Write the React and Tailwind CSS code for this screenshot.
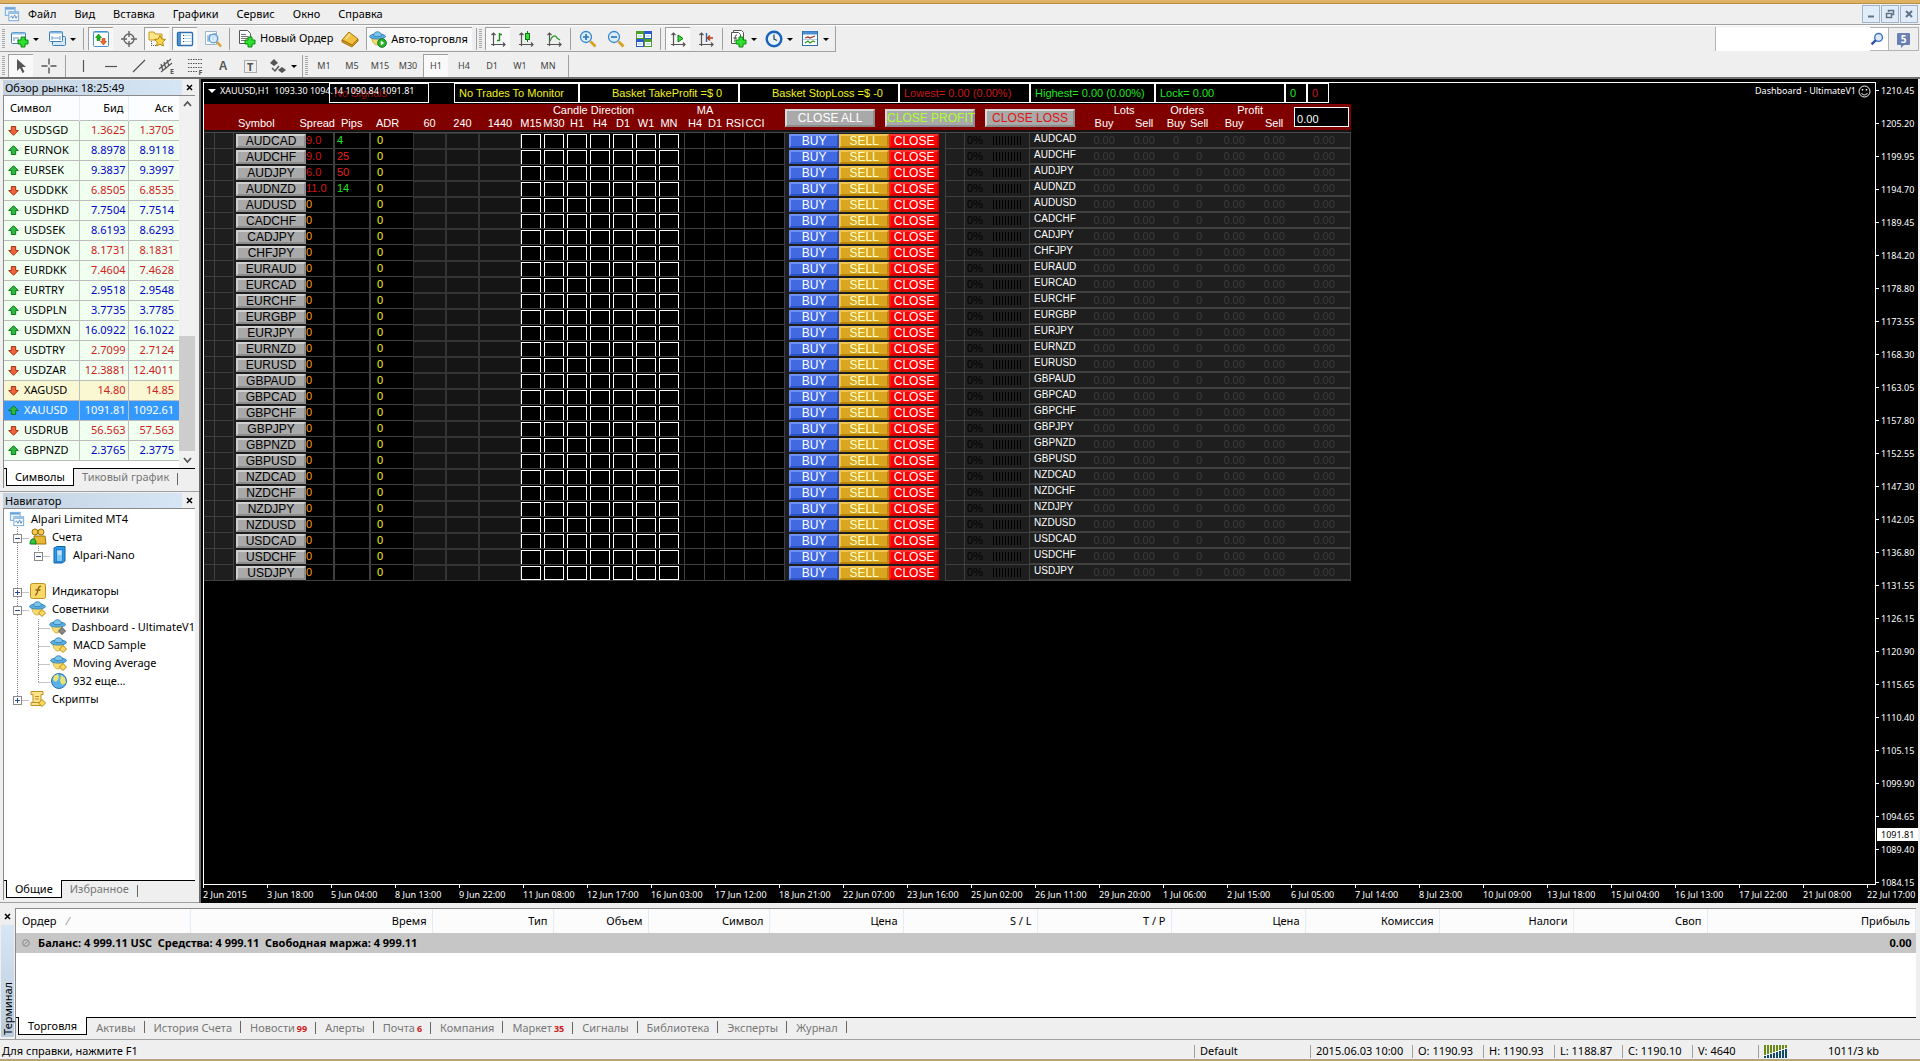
import { useState } from "react"

const quotes = [
  ["USDSGD", "1.3625", "1.3705", "down"],
  ["EURNOK", "8.8978", "8.9118", "up"],
  ["EURSEK", "9.3837", "9.3997", "up"],
  ["USDDKK", "6.8505", "6.8535", "down"],
  ["USDHKD", "7.7504", "7.7514", "up"],
  ["USDSEK", "8.6193", "8.6293", "up"],
  ["USDNOK", "8.1731", "8.1831", "down"],
  ["EURDKK", "7.4604", "7.4628", "down"],
  ["EURTRY", "2.9518", "2.9548", "up"],
  ["USDPLN", "3.7735", "3.7785", "up"],
  ["USDMXN", "16.0922", "16.1022", "up"],
  ["USDTRY", "2.7099", "2.7124", "down"],
  ["USDZAR", "12.3881", "12.4011", "down"],
  ["XAGUSD", "14.80", "14.85", "down"],
  ["XAUUSD", "1091.81", "1092.61", "up"],
  ["USDRUB", "56.563", "57.563", "down"],
  ["GBPNZD", "2.3765", "2.3775", "up"],
]

const pairs = [
  "AUDCAD", "AUDCHF", "AUDJPY", "AUDNZD", "AUDUSD", "CADCHF", "CADJPY",
  "CHFJPY", "EURAUD", "EURCAD", "EURCHF", "EURGBP", "EURJPY", "EURNZD",
  "EURUSD", "GBPAUD", "GBPCAD", "GBPCHF", "GBPJPY", "GBPNZD", "GBPUSD",
  "NZDCAD", "NZDCHF", "NZDJPY", "NZDUSD", "USDCAD", "USDCHF", "USDJPY",
]

const live = {
  AUDCAD: { spread: "9.0", pips: "4", good: true },
  AUDCHF: { spread: "9.0", pips: "25", good: false },
  AUDJPY: { spread: "6.0", pips: "50", good: false },
  AUDNZD: { spread: "11.0", pips: "14", good: true },
}

const prices = [
  "1210.45", "1205.20", "1199.95", "1194.70", "1189.45", "1184.20", "1178.80",
  "1173.55", "1168.30", "1163.05", "1157.80", "1152.55", "1147.30", "1142.05",
  "1136.80", "1131.55", "1126.15", "1120.90", "1115.65", "1110.40", "1105.15",
  "1099.90", "1094.65", "1089.40", "1084.15",
]

const times = [
  "2 Jun 2015", "3 Jun 18:00", "5 Jun 04:00", "8 Jun 13:00", "9 Jun 22:00",
  "11 Jun 08:00", "12 Jun 17:00", "16 Jun 03:00", "17 Jun 12:00", "18 Jun 21:00",
  "22 Jun 07:00", "23 Jun 16:00", "25 Jun 02:00", "26 Jun 11:00", "29 Jun 20:00",
  "1 Jul 06:00", "2 Jul 15:00", "6 Jul 05:00", "7 Jul 14:00", "8 Jul 23:00",
  "10 Jul 09:00", "13 Jul 18:00", "15 Jul 04:00", "16 Jul 13:00", "17 Jul 22:00",
  "21 Jul 08:00", "22 Jul 17:00",
]

const menu = ["Файл", "Вид", "Вставка", "Графики", "Сервис", "Окно", "Справка"]
const timeframes = ["M1", "M5", "M15", "M30", "H1", "H4", "D1", "W1", "MN"]
const candleFrames = ["M15", "M30", "H1", "H4", "D1", "W1", "MN"]

const terminalTabs = [
  ["Торговля"], ["Активы"], ["История Счета"], ["Новости", "99"], ["Алерты"],
  ["Почта", "6"], ["Компания"], ["Маркет", "35"], ["Сигналы"], ["Библиотека"],
  ["Эксперты"], ["Журнал"],
]

/* ---------- icons ---------- */

const Svg = ({ size = 18, children }) => (
  <svg width={size} height={size} viewBox="0 0 18 18" fill="none" className="shrink-0" aria-hidden="true">
    {children}
  </svg>
)

const Plus = () => (
  <path d="M10 7h4v3h3v4h-3v3h-4v-3H7v-4h3z" fill="#2fe02f" stroke="#0a8a12" />
)

const AppIcon = () => (
  <Svg size={16}>
    <rect x="1.5" y="1.5" width="11" height="9" fill="#e8f3fc" stroke="#6aa3d8" />
    <path d="M2 3h10" stroke="#6aa3d8" strokeWidth="2" />
    <rect x="5.5" y="6.5" width="11" height="10" fill="#fff" stroke="#6aa3d8" />
    <path d="M6 8h10" stroke="#8cbce6" strokeWidth="2" />
    <path d="M7 13l1.5-2 1.5 3 2-4 1.5 4 1.5-3" stroke="#4a86c0" />
  </Svg>
)

const NewChartIcon = () => (
  <Svg>
    <rect x="0.5" y="2.5" width="14" height="11" rx="1" fill="#fff" stroke="#3c7fb1" />
    <path d="M1 3.5h13" stroke="#8cc0e6" strokeWidth="2" />
    <path d="M3 11V7M5 9v-2M7 11V7" stroke="#5a8fc0" />
    <Plus />
  </Svg>
)

const ProfilesIcon = () => (
  <Svg>
    <rect x="4.5" y="6.5" width="13" height="9" rx="1" fill="#d4e8f8" stroke="#3c7fb1" />
    <rect x="1.5" y="1.5" width="13" height="10" rx="1" fill="#fff" stroke="#3c7fb1" />
    <path d="M2 2.5h12" stroke="#7db4e0" strokeWidth="2" />
    <path d="M4 8h8M4 6v4M12 6v4" stroke="#6aa3d8" />
  </Svg>
)

const MarketIcon = () => (
  <Svg>
    <rect x="1.5" y="1.5" width="15" height="15" rx="1" fill="#fff" stroke="#4a90cc" />
    <path d="M2 2.5h14" stroke="#8cc0e6" />
    <path d="M6.5 4l3 3.5H8v3H5v-3H3.5z" fill="#1db51d" stroke="#0a7a12" strokeWidth=".6" />
    <path d="M11.5 15l-3-3.5H10v-3h3v3h1.5z" fill="#f06a30" stroke="#b03a10" strokeWidth=".6" />
  </Svg>
)

const TargetIcon = () => (
  <Svg>
    <circle cx="9" cy="9" r="5" stroke="#666" strokeWidth="1.4" />
    <path d="M9 1v6M9 11v6M1 9h6M11 9h6" stroke="#666" strokeWidth="1.4" />
  </Svg>
)

const FolderStarIcon = () => (
  <Svg>
    <path d="M1 2h5l1 2h7v6H1z" fill="#fbe68a" stroke="#c79a20" />
    <path d="M3.5 11v5M5 15.5h3" stroke="#555" strokeDasharray="1 1" />
    <path d="M12 5.5l1.7 3.5 3.8.5-2.8 2.7.7 3.8-3.4-1.8-3.4 1.8.7-3.8L6.5 9.5l3.8-.5z" fill="#fbd84a" stroke="#b8860b" />
  </Svg>
)

const PanelIcon = () => (
  <Svg>
    <rect x="1.5" y="2.5" width="15" height="13" rx="1" fill="#fff" stroke="#2a6fb0" strokeWidth="1.4" />
    <rect x="2" y="3" width="3" height="12" fill="#4a90d0" />
    <path d="M7 5.5h8M7 8.5h8M7 11.5h8" stroke="#b8d4ec" />
    <path d="M7 5.5h1M7 8.5h1M7 11.5h1" stroke="#444" />
  </Svg>
)

const TesterIcon = () => (
  <Svg>
    <path d="M1.5 1.5h11v13h-11z" fill="#fff" stroke="#9ab4cc" />
    <path d="M4 12V5M6 9V4M9 10V4M11 7V3" stroke="#5a8fc0" />
    <circle cx="9.5" cy="8.5" r="4.3" fill="#cfe8fb" fillOpacity=".8" stroke="#5a9ad4" strokeWidth="1.3" />
    <path d="M13 12l4 4.5" stroke="#d8a030" strokeWidth="2.5" />
  </Svg>
)

const NewOrderIcon = () => (
  <Svg>
    <path d="M1.5.5h8l3 3v10h-11z" fill="#fff" stroke="#555" />
    <path d="M3 4.5h5M3 6.5h7M3 8.5h7M3 10.5h4" stroke="#777" />
    <Plus />
  </Svg>
)

const BookIcon = () => (
  <Svg>
    <path d="M1 10L8 2l9 7-6 6z" fill="#f2c040" stroke="#a87410" />
    <path d="M1 10v2l10 5 6-6V9l-6 6z" fill="#d89a20" stroke="#a87410" />
    <path d="M5 9l4-5" stroke="#fde690" strokeWidth="1.5" />
  </Svg>
)

// hat-and-face adviser glyph; badge is the small mark at its lower right
const AdvisorIcon = ({ badge = "gold" }) => (
  <Svg>
    <path d="M3 7h10c.5 4-2 8-5 8S2.500 11 3 7z" fill="#f6dc70" stroke="#c8a030" strokeWidth=".8" />
    <ellipse cx="8.5" cy="6.5" rx="8" ry="2.6" fill="#5aaee0" stroke="#2a78b0" strokeWidth=".8" />
    <path d="M4.5 5.5c0-5 8-5 8 0 0 1.5-8 1.5-8 0z" fill="#7cc6ee" stroke="#2a78b0" strokeWidth=".8" />
    {badge === "gold" && <path d="M13 9.5l3.5 3.5-3.5 3.5L9.5 13z" fill="#fbd860" stroke="#b8860b" />}
    {badge === "gray" && <path d="M13 9.5l3.5 3.5-3.5 3.5L9.5 13z" fill="#888" stroke="#555" />}
    {badge === "play" && (
      <>
        <circle cx="13" cy="13" r="4.3" fill="#2cb52c" stroke="#0a7a12" />
        <path d="M11.8 10.8l3.4 2.2-3.4 2.2z" fill="#fff" />
      </>
    )}
  </Svg>
)

const Axes = () => (
  <path d="M4.5 16V3M2.500 5l2-2 2 2M2 14.500h14M14 12.500l2 2-2 2" stroke="#555" strokeWidth="1.2" />
)

const BarChartIcon = () => (
  <Svg>
    <Axes />
    <path d="M10.5 3v8M8 10.5h2.500M10.5 4.500H13" stroke="#1d8a1d" strokeWidth="1.4" />
  </Svg>
)

const CandleIcon = () => (
  <Svg>
    <Axes />
    <path d="M10.5 1v11" stroke="#0a7a12" />
    <rect x="8.5" y="3.5" width="4" height="6" fill="#3fd83f" stroke="#0a7a12" />
  </Svg>
)

const LineChartIcon = () => (
  <Svg>
    <Axes />
    <path d="M5 11c2-5 5-7 7-3l3 2" stroke="#2a9a2a" strokeWidth="1.2" />
  </Svg>
)

const ZoomIcon = ({ plus }) => (
  <Svg>
    <circle cx="7" cy="7" r="5.5" fill="#d8eefc" stroke="#3c86c8" strokeWidth="1.3" />
    <path d={plus ? "M4 7h6M7 4v6" : "M4 7h6"} stroke="#2a70b0" strokeWidth="1.6" />
    <path d="M11.5 11.5l5 5" stroke="#d8a020" strokeWidth="2.8" />
  </Svg>
)

const TileIcon = () => (
  <Svg>
    <rect x="1" y="1" width="8" height="8" fill="#4aa02a" />
    <rect x="9" y="1" width="8" height="8" fill="#2a5ac8" />
    <rect x="1" y="9" width="8" height="8" fill="#2a5ac8" />
    <rect x="9" y="9" width="8" height="8" fill="#4aa02a" />
    <path d="M2 4h6v4H2zM10 4h6v4h-6zM2 12h6v4H2zM10 12h6v4h-6z" fill="#fff" />
    <path d="M3 6h4M11 6h4M3 14h4M11 14h4" stroke="#9ac0e0" />
  </Svg>
)

const ScrollIcon = () => (
  <Svg>
    <Axes />
    <path d="M9 5l5 3.500L9 12z" fill="#3fd83f" stroke="#0a7a12" />
  </Svg>
)

const ShiftIcon = () => (
  <Svg>
    <Axes />
    <path d="M9.5 3v9" stroke="#2a60a0" strokeWidth="1.4" />
    <path d="M16 8h-5M13 5.500L10.500 8l2.500 2.500" stroke="#b83a10" strokeWidth="1.5" />
  </Svg>
)

const IndicatorsIcon = () => (
  <Svg>
    <path d="M4.500.5h8l2 2v10h-10z" fill="#fff" stroke="#555" />
    <path d="M2.500 2.500h7l2 2v9h-9z" fill="#fff" stroke="#555" />
    <path d="M8 5c-3-1-1 7-3 6.500M4.500 8h3.500" stroke="#444" />
    <Plus />
  </Svg>
)

const ClockIcon = () => (
  <Svg>
    <circle cx="9" cy="9" r="7.3" fill="#e8f4fd" stroke="#1a62b8" strokeWidth="2.4" />
    <path d="M9 4.500V9l3 1.500" stroke="#444" strokeWidth="1.3" />
  </Svg>
)

const TemplateIcon = () => (
  <Svg>
    <rect x="1.5" y="1.5" width="15" height="14" fill="#fff" stroke="#2a6fb0" />
    <path d="M2 3h14" stroke="#4a90d0" strokeWidth="3" />
    <path d="M4 8l3-1 2 1 5-2" stroke="#a03020" strokeWidth="1.3" />
    <path d="M4 13l3-2 2 2 3-2 2 1" stroke="#2a9a2a" strokeWidth="1.3" />
    <path d="M2 9.500h14" stroke="#bcd" />
  </Svg>
)

const CursorIcon = () => (
  <Svg>
    <path d="M5 2v12l3-3 2.500 5 2-1-2.500-5h4z" fill="#555" />
  </Svg>
)

const CrossIcon = () => (
  <Svg>
    <path d="M9 1.500v6M9 10.500v6M1.500 9h6M10.500 9h6" stroke="#555" strokeWidth="1.4" />
  </Svg>
)

const LineIcon = ({ d }) => (
  <Svg>
    <path d={d} stroke="#555" strokeWidth="1.2" />
  </Svg>
)

const ChannelIcon = () => (
  <Svg>
    <path d="M1 12L13 2M3 15L14 6M3 7l2 7M6 5l2 7M9 3l2 6" stroke="#555" strokeWidth="1.2" />
    <text x="12" y="17" fontSize="7" fontWeight="bold" fill="#555">E</text>
  </Svg>
)

const FiboIcon = () => (
  <Svg>
    <path d="M2 2.500h14M2 6.500h14M2 10.500h14M2 14.500h9" stroke="#555" strokeDasharray="1.5 1" />
    <text x="12.5" y="17.5" fontSize="7" fontWeight="bold" fill="#555">F</text>
  </Svg>
)

const TextBoxIcon = () => (
  <Svg>
    <rect x="2.5" y="3.5" width="12" height="12" stroke="#666" strokeDasharray="1 1" />
    <text x="5" y="14" fontSize="11" fontWeight="bold" fill="#555">T</text>
  </Svg>
)

const ArrowsIcon = () => (
  <Svg>
    <path d="M5 2l4 4-4 3-4-3zM13 10l4 3-4 3-4-3z" fill="#555" />
    <path d="M3 11l3 3 4-5" stroke="#555" strokeWidth="1.5" />
  </Svg>
)

const SearchIcon = () => (
  <Svg size={14}>
    <circle cx="11" cy="7" r="5" fill="#dce9f8" stroke="#3a6fc8" strokeWidth="1.8" />
    <path d="M7.500 10.500L2 16" stroke="#2a52a8" strokeWidth="3" />
  </Svg>
)

const QuoteArrow = ({ dir }) => (
  <svg width="11" height="11" viewBox="0 0 11 11" className="shrink-0" aria-hidden="true">
    {dir === "up" ? (
      <path d="M5.500.7L10.300 5.500H7.700v4H3.300v-4H.7z" fill="#2fb83f" stroke="#0b7a1c" />
    ) : (
      <path d="M5.500 10.300L.7 5.500h2.600v-4h4.400v4h2.600z" fill="#f0623a" stroke="#a8340f" />
    )}
  </svg>
)

const AccountsIcon = () => (
  <Svg>
    <circle cx="6" cy="4" r="3" fill="#f2c84a" stroke="#9a7010" />
    <circle cx="12" cy="4" r="3" fill="#f2c84a" stroke="#9a7010" />
    <path d="M5 8h11l1 8H6z" fill="#e8b830" stroke="#9a7010" />
    <path d="M1 16c0-6 5-7 6-2v2z" fill="#2fc83f" stroke="#0b7a1c" />
  </Svg>
)

const ServerIcon = () => (
  <Svg>
    <path d="M4 2l3-1.500h8V15l-3 2H4z" fill="#2a9ae8" stroke="#0f62a8" />
    <rect x="6.5" y="3.5" width="6" height="12" fill="#7cc8f8" stroke="#0f62a8" strokeWidth=".6" />
    <path d="M7.500 6h4M7.500 8h4" stroke="#fff" />
  </Svg>
)

const FunctionIcon = () => (
  <Svg>
    <rect x="1.5" y="1.5" width="15" height="15" rx="2" fill="#f8d868" stroke="#c09020" />
    <path d="M12 4.500c-4-1.500-2.500 9-6 8.500M6.500 8h5" stroke="#8a6410" strokeWidth="1.4" />
  </Svg>
)

const GlobeIcon = () => (
  <Svg>
    <circle cx="9" cy="9" r="7.5" fill="#5ab0e8" stroke="#2a70b0" />
    <path d="M4 4l4-2 1 4-3 4-3-2zM11 3l4 3 1 5-4 2-2-4z" fill="#e8e470" />
  </Svg>
)

const ScriptIcon = () => (
  <Svg>
    <path d="M2 1.500h12v3h-2v8H4v-8H2zM2 12.500h10v3H2z" fill="#fbe48a" stroke="#c09020" />
    <path d="M6 6.500h4M6 9h4" stroke="#c09020" />
    <path d="M13 9.500l3.500 3.500-3.500 3.500L9.500 13z" fill="#fbd860" stroke="#b8860b" />
  </Svg>
)

/* ---------- toolbar parts ---------- */

const Tool = ({ label, pressed, caret, children }) => (
  <button
    type="button"
    aria-label={label}
    aria-pressed={pressed}
    className={`flex h-[23px] shrink-0 items-center justify-center gap-1 border-t border-l ${
      caret ? "w-8" : "w-[25px]"
    } ${pressed ? "border-[#a0a0a0] bg-[#f9f9f9]" : "border-transparent"}`}
  >
    {children}
    {caret && <span className="h-0 w-0 shrink-0 border-x-[3px] border-t-[3px] border-x-transparent border-t-black"></span>}
  </button>
)

const Grip = () => <span className="mr-[3px] ml-0.5 h-5 w-[3px] shrink-0 bg-[repeating-linear-gradient(#a8a8a8_0_1px,#efefef_1px_2px)]"></span>
const Sep = () => <span className="h-[22px] w-px shrink-0 bg-[#a0a0a0]"></span>

const MenuBar = () => (
  <div className="flex h-[21px] items-center border-b border-[#a0a0a0] pl-1">
    <AppIcon />
    <nav className="ml-2 flex gap-[18px] text-[11px] leading-4 text-black">
      {menu.map((item) => (
        <a key={item} href="#">{item}</a>
      ))}
    </nav>
    <div className="ml-auto flex gap-px pr-0.5 text-[#5f7486]">
      {["Свернуть", "Восстановить", "Закрыть"].map((label, i) => (
        <button
          key={label}
          type="button"
          aria-label={label}
          className="flex h-[18px] w-[18px] items-center justify-center border border-[#9db4cc] bg-[#e0ecf8]"
        >
          <svg width="10" height="10" viewBox="0 0 10 10" fill="none" stroke="currentColor" strokeWidth="1.5">
            {i === 0 && <path d="M2 7.500h6" strokeWidth="2" />}
            {i === 1 && <path d="M3.500 3V1.500h5v4H7M1.500 4.500h5v4h-5z" />}
            {i === 2 && <path d="M2 2l6 6M8 2L2 8" strokeWidth="2" />}
          </svg>
        </button>
      ))}
    </div>
  </div>
)

const MainToolbar = () => (
  <div className="flex h-[27px] items-stretch justify-between border-t border-white">
    <div className="flex items-center border-r border-b border-[#a0a0a0]">
      <Grip />
      <div className="flex gap-[5px] pr-1.5">
        <Tool label="Новый график" caret><NewChartIcon /></Tool>
        <Tool label="Профили" caret><ProfilesIcon /></Tool>
      </div>
      <Sep />
      <div className="flex gap-[3px] px-1">
        <Tool label="Обзор рынка" pressed><MarketIcon /></Tool>
        <Tool label="Окно данных"><TargetIcon /></Tool>
        <Tool label="Навигатор" pressed><FolderStarIcon /></Tool>
        <Tool label="Терминал" pressed><PanelIcon /></Tool>
        <Tool label="Тестер стратегий"><TesterIcon /></Tool>
      </div>
      <Sep />
      <button type="button" className="mr-1 ml-2 flex items-center gap-1 text-[11px]">
        <NewOrderIcon />
        Новый Ордер
      </button>
      <Tool label="MetaEditor"><BookIcon /></Tool>
      <button type="button" className="mx-1 flex h-[23px] items-center gap-1 border-t border-l border-[#a0a0a0] bg-[#f9f9f9] pr-1 pl-0.5 text-[11px]">
        <AdvisorIcon badge="play" />
        Авто-торговля
      </button>
      <Sep />
      <Grip />
      <div className="flex gap-[3px] pr-1">
        <Tool label="Бары" pressed><BarChartIcon /></Tool>
        <Tool label="Свечи"><CandleIcon /></Tool>
        <Tool label="Линия"><LineChartIcon /></Tool>
      </div>
      <Sep />
      <div className="flex gap-[3px] px-1">
        <Tool label="Увеличить"><ZoomIcon plus /></Tool>
        <Tool label="Уменьшить"><ZoomIcon /></Tool>
        <Tool label="Окна мозаикой"><TileIcon /></Tool>
      </div>
      <Sep />
      <div className="flex gap-[3px] px-1">
        <Tool label="Автопрокрутка" pressed><ScrollIcon /></Tool>
        <Tool label="Сдвиг графика"><ShiftIcon /></Tool>
      </div>
      <Sep />
      <div className="flex gap-1 px-1">
        <Tool label="Индикаторы" caret><IndicatorsIcon /></Tool>
        <Tool label="Периоды" caret><ClockIcon /></Tool>
        <Tool label="Шаблоны" caret><TemplateIcon /></Tool>
      </div>
    </div>
    <div className="mt-px mr-px flex h-6 items-stretch border border-[#b4b4b4]">
      <div className="flex w-[172px] items-center bg-white pr-1">
        <input aria-label="Поиск" className="min-w-0 flex-1 bg-white px-1 outline-none" />
        <SearchIcon />
      </div>
      <button type="button" aria-label="Сообщения" className="flex w-[30px] items-center justify-center border-l border-[#b4b4b4]">
        <span className="relative rounded-[1px] bg-[#6a80b4] px-1 text-[10px] leading-3 font-bold text-white">
          5
          <span className="absolute top-full left-1 h-0 w-0 border-t-[3px] border-r-[3px] border-t-[#6a80b4] border-r-transparent"></span>
        </span>
      </button>
    </div>
  </div>
)

const LineToolbar = () => {
  const [active, setActive] = useState("H1")
  return (
    <div className="flex h-[27px] items-center border-b-2 border-[#707070] pt-0.5">
      <Grip />
      <div className="flex gap-[3px] pr-1">
        <Tool label="Курсор" pressed><CursorIcon /></Tool>
        <Tool label="Перекрестие"><CrossIcon /></Tool>
      </div>
      <Sep />
      <div className="flex gap-[3px] pl-1">
        <Tool label="Вертикальная линия"><LineIcon d="M9.500 3v12" /></Tool>
        <Tool label="Горизонтальная линия"><LineIcon d="M3 9.500h12" /></Tool>
        <Tool label="Трендовая линия"><LineIcon d="M3 15L15 3" /></Tool>
        <Tool label="Канал"><ChannelIcon /></Tool>
        <Tool label="Фибоначчи"><FiboIcon /></Tool>
        <Tool label="Текст"><span className="font-['Liberation_Sans',sans-serif] text-[12px] font-bold text-[#555]">A</span></Tool>
        <Tool label="Метка"><TextBoxIcon /></Tool>
        <Tool label="Стрелки" caret><ArrowsIcon /></Tool>
      </div>
      <span className="w-1"></span>
      <Sep />
      <Grip />
      <div className="flex gap-[3px] pr-2">
        {timeframes.map((tf) => (
          <button
            key={tf}
            type="button"
            onClick={() => setActive(tf)}
            className={`h-[23px] w-[25px] border-t border-l text-center text-[9px] text-[#444] ${
              active === tf ? "border-[#a0a0a0] bg-[#f9f9f9]" : "border-transparent"
            }`}
          >
            {tf}
          </button>
        ))}
      </div>
      <Sep />
    </div>
  )
}

/* ---------- left column ---------- */

const PanelTitle = ({ children }) => (
  <div className="ml-[3px] flex h-[15px] items-center justify-between pr-1 text-[11px] leading-[15px]">
    <span className="w-[179px] bg-linear-to-r from-[#c4d2e0] to-[#d6e6f5] pl-0.5">{children}</span>
    <button type="button" aria-label="Закрыть" className="flex h-3 w-3 items-center justify-center">
      <svg width="7" height="7" viewBox="0 0 7 7" stroke="#000" strokeWidth="1.5">
        <path d="M1 1l5 5M6 1L1 6" />
      </svg>
    </button>
  </div>
)

const PanelTabs = ({ active, other }) => (
  <div className="flex h-5 items-start border-t border-black bg-[#efefef] text-[11px] leading-4">
    <button type="button" className="-mt-px ml-0.5 h-[18px] border-x border-b border-black bg-white px-2">{active}</button>
    <button type="button" className="px-2 text-[#777]">{other}</button>
    <span className="mt-1 h-3 w-px bg-[#666]"></span>
  </div>
)

const MarketWatch = () => (
  <section>
    <PanelTitle>Обзор рынка: 18:25:49</PanelTitle>
    <div className="mr-1 ml-[3px] border-t border-l border-[#8a8a8a] bg-white">
      <div className="flex">
        <div className="h-[372px] flex-1">
          <table className="w-full table-fixed text-[11px]">
            <colgroup>
              <col />
              <col className="w-[49px]" />
              <col className="w-[51px]" />
            </colgroup>
            <thead>
              <tr className="h-6 bg-[#fcfdfe]">
                <th className="border-r border-[#e2edf7] py-0 pl-1.5 text-left font-normal">Символ</th>
                <th className="border-r border-[#e2edf7] py-0 pr-1 text-right font-normal">Бид</th>
                <th className="py-0 pr-1.5 text-right font-normal">Аск</th>
              </tr>
            </thead>
            <tbody className="border-b border-[#bdbdbd]">
              {quotes.map(([symbol, bid, ask, dir]) => {
                const selected = symbol === "XAUUSD"
                const tone = selected ? "text-white" : dir === "up" ? "text-[#0000c8]" : "text-[#d0201c]"
                return (
                  <tr
                    key={symbol}
                    className={`h-5 border-t border-[#bdbdbd] ${
                      selected ? "bg-[#3399ff] text-white" : symbol === "XAGUSD" ? "bg-[#faf8d2]" : "bg-[#f0fff0]"
                    }`}
                  >
                    <td className="border-r border-[#bdbdbd] p-0">
                      <span className="flex items-center gap-[5px] pl-1 leading-[18px]">
                        <QuoteArrow dir={dir} />
                        {symbol}
                      </span>
                    </td>
                    <td className={`border-r border-[#bdbdbd] py-0 pr-0.5 text-right leading-[18px] ${tone}`}>{bid}</td>
                    <td className={`py-0 pr-[5px] text-right leading-[18px] ${tone}`}>{ask}</td>
                  </tr>
                )
              })}
            </tbody>
          </table>
        </div>
        <div className="flex w-[16px] flex-col items-center bg-[#f1f1f1] py-1">
          <svg width="9" height="9" viewBox="0 0 9 9" fill="none" stroke="#555" strokeWidth="1.8">
            <path d="M1 6l3.500-4L8 6" />
          </svg>
          <div className="flex-1"></div>
          <div className="h-[115px] w-full bg-[#cdcdcd]"></div>
          <svg width="9" height="9" viewBox="0 0 9 9" fill="none" stroke="#555" strokeWidth="1.8" className="mt-1">
            <path d="M1 3l3.500 4L8 3" />
          </svg>
        </div>
      </div>
      <PanelTabs active="Символы" other="Тиковый график" />
    </div>
  </section>
)

const Expander = ({ open }) => (
  <svg width="9" height="9" viewBox="0 0 9 9" className="mt-0.5 shrink-0" aria-hidden="true">
    <rect x=".5" y=".5" width="8" height="8" fill="#fff" stroke="#8a8a8a" />
    <path d={open ? "M2 4.500h5" : "M2 4.500h5M4.500 2v5"} stroke="#2a4a9a" />
  </svg>
)

const tree = [
  { level: 1, open: true, icon: <AccountsIcon />, label: "Счета" },
  { level: 2, open: true, icon: <ServerIcon />, label: "Alpari-Nano" },
  { level: 0 },
  { level: 1, open: false, icon: <FunctionIcon />, label: "Индикаторы" },
  { level: 1, open: true, icon: <AdvisorIcon />, label: "Советники" },
  { level: 2, icon: <AdvisorIcon badge="gray" />, label: "Dashboard - UltimateV1" },
  { level: 2, icon: <AdvisorIcon />, label: "MACD Sample" },
  { level: 2, icon: <AdvisorIcon />, label: "Moving Average" },
  { level: 2, icon: <GlobeIcon />, label: "932 еще..." },
  { level: 1, open: false, icon: <ScriptIcon />, label: "Скрипты" },
]

const Navigator = () => (
  <section className="mt-[3px] flex flex-1 flex-col border-t border-[#a0a0a0] pt-px">
    <PanelTitle>Навигатор</PanelTitle>
    <div className="mr-1 ml-[3px] flex flex-1 flex-col border-t border-l border-[#8a8a8a] bg-white">
      <div className="relative flex-1 overflow-hidden pt-px text-[11px] leading-[18px] whitespace-nowrap">
        <svg width="60" height="200" className="absolute top-0 left-0" fill="none" stroke="#888" strokeDasharray="1 1" aria-hidden="true">
          <path d="M13.500 18v173M13.500 29.500h12M13.500 83.500h12M13.500 101.500h12M13.500 191.500h12" />
          <path d="M34.500 37v10M34.500 47.500h12M34.500 110v64M34.500 119.500h12M34.500 137.500h12M34.500 155.500h12M34.500 173.500h12" />
        </svg>
        <div className="relative flex items-center pl-[5px]">
          <AppIcon />
          <span className="ml-1.5">Alpari Limited MT4</span>
        </div>
        {tree.map((node, i) => (
          <div
            key={i}
            className={`relative flex h-[18px] items-center ${node.level === 2 ? "pl-[30px]" : "pl-[9px]"}`}
          >
            {node.open === undefined ? <span className="w-[9px]"></span> : <Expander open={node.open} />}
            <span className="ml-[7px] flex items-center gap-[5px]">
              {node.icon}
              {node.label}
            </span>
          </div>
        ))}
      </div>
      <PanelTabs active="Общие" other="Избранное" />
    </div>
    <div className="h-[3px] border-b border-[#a0a0a0]"></div>
  </section>
)

/* ---------- dashboard ---------- */

const columns = [
  "w-[11px]", "w-[19px]", "w-[72px]", "w-[29px]", "w-[35px]", "w-[43px]",
  "w-[33px]", "w-[33px]", "w-[42px]",
  "w-[23px]", "w-[23px]", "w-[23px]", "w-[23px]", "w-[23px]", "w-[23px]", "w-[23px]",
  "w-[3px]", "w-[20px]", "w-[20px]", "w-[20px]", "w-[20px]", "w-[20px]",
  "w-[161px]", "w-[19px]", "w-[27px]", "w-[38px]", "w-[54px]",
  "w-[40px]", "w-[40px]", "w-[24px]", "w-[22px]", "w-[48px]", "w-[32px]", "w-[61px]",
]

const StatusBox = ({ className, children }) => (
  <div className={`flex h-5 items-center border border-white px-1 ${className}`}>{children}</div>
)

const BigButton = ({ className, children }) => (
  <button
    type="button"
    className={`h-[18px] w-[90px] border-2 border-t-[#d8d8d8] border-r-[#8c8c8c] border-b-[#8c8c8c] border-l-[#d8d8d8] bg-[#a9a9a9] text-[12px] leading-[14px] whitespace-nowrap ${className}`}
  >
    {children}
  </button>
)

const RowButton = ({ className, children }) => (
  <button type="button" className={`h-[14px] w-[50px] border-2 text-[12px] leading-[11px] ${className}`}>
    {children}
  </button>
)

const PairRow = ({ pair }) => {
  const info = live[pair]
  const dim = "border-b-2 border-[#404040] bg-[#1e1e1e] text-[#3c3c3c]"
  return (
    <tr className="group h-4">
      <td className="border-r border-b border-[#404040] bg-[#1e1e1e]"></td>
      <td className="border-r border-b border-[#404040] bg-[#1e1e1e]"></td>
      <td className="bg-[#1e1e1e] pl-0.5">
        <button
          type="button"
          className="block h-[14px] w-[70px] border-2 border-t-[#d0d0d0] border-r-[#8c8c8c] border-b-[#8c8c8c] border-l-[#d0d0d0] bg-[#a9a9a9] text-[12px] leading-[10px] text-black"
        >
          {pair}
        </button>
      </td>
      <td className={`border-r-2 border-b border-[#404040] bg-black ${info ? "text-[#d01818]" : "text-[#ff9c1a]"}`}>
        {info ? info.spread : "0"}
      </td>
      <td className={`border-r border-b border-[#404040] bg-black pl-0.5 ${info && info.good ? "text-[#1ee61e]" : "text-[#e61e1e]"}`}>
        {info ? info.pips : ""}
      </td>
      <td className="border-b border-l border-[#404040] bg-black pl-1.5 text-[#f0f020]">0</td>
      <td className="border border-[#343434] bg-[#151515]"></td>
      <td className="border border-[#343434] bg-[#151515]"></td>
      <td className="border border-[#343434] bg-[#151515]"></td>
      {candleFrames.map((tf) => (
        <td key={tf} className="border-b border-[#404040] bg-black align-bottom">
          <div className="h-[14px] w-5 border-x border-t border-white group-last:border-b"></div>
        </td>
      ))}
      <td className="border-r border-b border-[#404040] bg-black"></td>
      {[0, 1, 2, 3, 4].map((n) => (
        <td key={n} className="border-r border-b border-[#404040] bg-black"></td>
      ))}
      <td className="border-r border-[#404040] bg-[#1e1e1e] pl-1">
        <div className="flex">
          <RowButton className="border-t-[#6f90f4] border-r-[#2c50c0] border-b-[#2c50c0] border-l-[#6f90f4] bg-[#4169e1] text-white">BUY</RowButton>
          <RowButton className="border-t-[#f0c450] border-r-[#b8860b] border-b-[#b8860b] border-l-[#f0c450] bg-[#daa520] text-[#ffffc8]">SELL</RowButton>
          <RowButton className="border-t-[#ff3030] border-r-[#d40000] border-b-[#d40000] border-l-[#ff2020] bg-[#ff0000] text-white">CLOSE</RowButton>
        </div>
      </td>
      <td className="border-r border-b border-[#404040] bg-[#1e1e1e]"></td>
      <td className="border-b border-[#404040] bg-[#1e1e1e] pl-0.5 text-black">0%</td>
      <td className="border-r border-b border-[#404040] bg-[#1e1e1e]">
        <div className="ml-px h-[9px] w-[28px] bg-[repeating-linear-gradient(90deg,#000_0_1px,#1e1e1e_1px_3px)]"></div>
      </td>
      <td className="border-b-2 border-[#404040] bg-[#1e1e1e] pl-1 align-top text-[10px] leading-3 text-white">{pair}</td>
      <td className={`text-center ${dim}`}>0.00</td>
      <td className={`text-center ${dim}`}>0.00</td>
      <td className={`text-center ${dim}`}>0</td>
      <td className={`text-center ${dim}`}>0</td>
      <td className={`text-center ${dim}`}>0.00</td>
      <td className={`text-center ${dim}`}>0.00</td>
      <td className={`border-r pl-2 text-center ${dim}`}>0.00</td>
    </tr>
  )
}

const Dashboard = () => (
  <div className="font-['Liberation_Sans',Arial,sans-serif] text-[11px]">
    <div className="flex items-start">
      <div className="relative flex h-[21px] w-[250px]">
        <StatusBox className="ml-[125px] w-[100px] text-[#a01010]">No Signals</StatusBox>
        <div className="absolute top-0 left-1 flex items-center gap-1 font-['Noto_Sans',sans-serif] text-[9px] leading-4 whitespace-pre text-white">
          <span className="h-0 w-0 border-x-[4px] border-t-[4px] border-x-transparent border-t-white"></span>
          XAUUSD,H1  1093.30 1094.14 1090.84 1091.81
        </div>
      </div>
      <StatusBox className="w-[125px] text-[#f0f020]">No Trades To Monitor</StatusBox>
      <StatusBox className="w-[160px] text-[#f0f020]"><span className="pl-7">Basket TakeProfit =$ 0</span></StatusBox>
      <StatusBox className="w-[160px] text-[#f0f020]"><span className="pl-7">Basket StopLoss =$ -0</span></StatusBox>
      <StatusBox className="w-[131px] text-[#c81818]">Lowest= 0.00 (0.00%)</StatusBox>
      <StatusBox className="w-[125px] text-[#1ee61e]">Highest= 0.00 (0.00%)</StatusBox>
      <StatusBox className="w-[130px] text-[#1ee61e]">Lock= 0.00</StatusBox>
      <StatusBox className="w-[22px] text-[#1ee61e]">0</StatusBox>
      <StatusBox className="w-[22px] text-[#c81818]">0</StatusBox>
      <div className="ml-auto flex items-center gap-0.5 pr-1 font-['Noto_Sans',sans-serif] text-[9px] leading-4 text-white">
        Dashboard - UltimateV1
        <svg width="13" height="13" viewBox="0 0 13 13" fill="none" stroke="#fff" aria-hidden="true">
          <circle cx="6.5" cy="6.5" r="5.5" />
          <path d="M3.500 8c1 2.500 5 2.500 6 0" />
          <path d="M4.500 4v1.500M8.500 4v1.500" strokeWidth="1.5" />
        </svg>
      </div>
    </div>
    <table className="w-[1147px] table-fixed border-separate border-spacing-0 leading-[13px] [&_td]:py-0 [&_td]:pr-0 [&_th]:p-0 [&_th]:font-normal">
      <colgroup>
        {columns.map((w, i) => (
          <col key={i} className={w} />
        ))}
      </colgroup>
      <thead className="bg-[#800000] text-white">
        <tr className="h-[13px]">
          <th colSpan={9}></th>
          <th colSpan={7}><span className="block pr-4">Candle Direction</span></th>
          <th></th>
          <th colSpan={2}>MA</th>
          <th colSpan={3}></th>
          <th colSpan={5} rowSpan={2}>
            <div className="flex gap-2.5 pt-0.5">
              <BigButton className="text-white">CLOSE ALL</BigButton>
              <BigButton className="text-[#adff2f]">CLOSE PROFIT</BigButton>
              <BigButton className="text-[#dc1414]">CLOSE LOSS</BigButton>
            </div>
          </th>
          <th colSpan={2}>Lots</th>
          <th colSpan={2}>Orders</th>
          <th colSpan={2}>Profit</th>
          <th rowSpan={2}>
            <input
              aria-label="Итог"
              defaultValue="0.00"
              className="ml-1 block h-5 w-[55px] border border-white bg-black pt-1 pl-0.5 text-left text-white outline-none"
            />
          </th>
        </tr>
        <tr className="h-[13px]">
          <th colSpan={2}></th>
          <th className="text-left"><span className="pl-1">Symbol</span></th>
          <th><div className="flex justify-end"><span>Spread</span></div></th>
          <th className="text-left"><span className="pl-1.5">Pips</span></th>
          <th className="text-left"><span className="pl-1.5">ADR</span></th>
          <th>60</th>
          <th>240</th>
          <th>1440</th>
          {candleFrames.map((tf) => (
            <th key={tf}><div className="flex w-5 justify-center">{tf}</div></th>
          ))}
          <th></th>
          <th>H4</th>
          <th>D1</th>
          <th>RSI</th>
          <th>CCI</th>
          <th></th>
          <th>Buy</th>
          <th>Sell</th>
          <th>Buy</th>
          <th>Sell</th>
          <th>Buy</th>
          <th>Sell</th>
        </tr>
      </thead>
      <tbody>
        <tr className="h-[3px]">
          <td colSpan={34} className="border-b border-[#4a4a4a] bg-[#141414]"></td>
        </tr>
        {pairs.map((pair) => (
          <PairRow key={pair} pair={pair} />
        ))}
      </tbody>
    </table>
  </div>
)

const Chart = () => (
  <section className="flex min-w-0 flex-1 flex-col border-l-2 border-[#6a6a6a] bg-black pt-[3px] pl-0.5">
    <div className="flex flex-1">
      <div className="min-w-0 flex-1 overflow-hidden border border-white">
        <Dashboard />
      </div>
      <div className="relative w-[42px] text-[9px] leading-[13px] text-white">
        {/* the last label hangs below the plot, beside the time scale */}
        <div className="-mb-7 pt-0.5 pl-[5px]">
          {prices.map((p) => (
            <div key={p} className="relative mb-5 h-[13px]">
              <span className="absolute top-1.5 -left-[5px] h-px w-[3px] bg-white"></span>
              {p}
            </div>
          ))}
        </div>
        <div className="absolute top-[746px] right-0 left-px bg-white pl-1 text-black">1091.81</div>
      </div>
    </div>
    <div className="flex h-[18px] overflow-hidden text-[9px] leading-[19px] whitespace-nowrap text-white">
      {times.map((t) => (
        <div key={t} className="w-16 shrink-0 bg-[linear-gradient(#fff,#fff)] bg-[length:1px_3px] bg-no-repeat">{t}</div>
      ))}
    </div>
  </section>
)

/* ---------- terminal ---------- */

const orderColumns = [
  ["Время", "w-[242px]"], ["Тип", "w-[121px]"], ["Объем", "w-[95px]"], ["Символ", "w-[121px]"],
  ["Цена", "w-[134px]"], ["S / L", "w-[134px]"], ["T / P", "w-[134px]"], ["Цена", "w-[134px]"],
  ["Комиссия", "w-[134px]"], ["Налоги", "w-[134px]"], ["Своп", "w-[134px]"], ["Прибыль", ""],
]

const Terminal = () => (
  <section className="mt-[5px] flex h-[131px] pr-1">
    <div className="flex w-[15px] flex-col items-center pb-0.5">
      <button type="button" aria-label="Закрыть" className="flex h-[17px] items-center">
        <svg width="7" height="7" viewBox="0 0 7 7" stroke="#000" strokeWidth="1.5">
          <path d="M1 1l5 5M6 1L1 6" />
        </svg>
      </button>
      <span className="w-[13px] flex-1 rotate-180 bg-linear-to-t from-[#d6e6f5] to-[#bccbdb] pt-0.5 text-[11px] leading-[13px] [writing-mode:vertical-rl]">
        Терминал
      </span>
    </div>
    <div className="flex min-w-0 flex-1 flex-col border-t border-l border-[#8a8a8a] bg-white">
      <div className="flex-1">
        <table className="w-full table-fixed text-[11px]">
          <thead>
            <tr className="h-6 bg-[#fcfcfd]">
              <th className="w-[174px] border-r border-[#e2edf7] py-0 pl-1.5 text-left font-normal">
                Ордер <span className="ml-2 text-[#888]">⁄</span>
              </th>
              {orderColumns.map(([name, width], i) => (
                <th key={i} className={`border-r border-[#e2edf7] py-0 pr-[5px] text-right font-normal ${width}`}>{name}</th>
              ))}
            </tr>
          </thead>
          <tbody>
            <tr className="h-5 bg-[#c6c6c6] font-bold">
              <td colSpan={12} className="p-0">
                <div className="flex items-center gap-2 pl-1.5 whitespace-pre">
                  <svg width="8" height="8" viewBox="0 0 8 8" fill="none" stroke="#888" aria-hidden="true">
                    <circle cx="4" cy="4" r="3.3" />
                    <path d="M2.500 5.500l3-3" />
                  </svg>
                  Баланс: 4 999.11 USC  Средства: 4 999.11  Свободная маржа: 4 999.11
                </div>
              </td>
              <td className="py-0 pr-1 text-right">0.00</td>
            </tr>
          </tbody>
        </table>
      </div>
      <div className="flex h-[22px] items-start border-t border-black bg-[#efefef] text-[11px] leading-4 text-[#777]">
        {terminalTabs.map(([name, count], i) =>
          i === 0 ? (
            <button key={name} type="button" className="-mt-px ml-0.5 h-[18px] border-x border-b border-black bg-white px-[9px] text-black">
              {name}
            </button>
          ) : (
            <div key={name} className="flex items-center">
              <button type="button" className="pt-0.5 pr-2 pl-[9px]">
                {name}
                {count && <span className="ml-0.5 text-[9px] font-bold text-[#d0201c]">{count}</span>}
              </button>
              <span className="h-3 w-px bg-[#666]"></span>
            </div>
          )
        )}
      </div>
    </div>
  </section>
)

const StatusCell = ({ className, children }) => (
  <div className={`my-px flex items-center border-l border-[#a0a0a0] pl-[5px] ${className}`}>{children}</div>
)

const StatusBar = () => (
  <footer className="flex h-5 border-t border-[#a0a0a0] pt-1 text-[11px] whitespace-nowrap">
    <div className="flex flex-1 items-center pl-0.5">Для справки, нажмите F1</div>
    <StatusCell className="w-[116px]">Default</StatusCell>
    <StatusCell className="w-[102px]">2015.06.03 10:00</StatusCell>
    <StatusCell className="w-[71px]">O: 1190.93</StatusCell>
    <StatusCell className="w-[71px]">H: 1190.93</StatusCell>
    <StatusCell className="w-[68px]">L: 1188.87</StatusCell>
    <StatusCell className="w-[70px]">C: 1190.10</StatusCell>
    <StatusCell className="w-[66px]">V: 4640</StatusCell>
    <StatusCell className="w-[162px]">
      <svg width="24" height="13" viewBox="0 0 24 13" aria-hidden="true">
        {[0, 1, 2, 3, 4, 5, 6, 7].map((n) => (
          <g key={n}>
            <rect x={n * 3} y="0" width="2" height={10 - n} fill="#6a8a1a" />
            <rect x={n * 3} y={11 - n} width="2" height={2 + n} fill="#0f4a6a" />
          </g>
        ))}
      </svg>
      <span className="ml-10">1011/3 kb</span>
    </StatusCell>
  </footer>
)

const App = () => (
  <div className="flex min-h-screen flex-col bg-[#efefef] font-['Noto_Sans','DejaVu_Sans',sans-serif] text-black">
    <div className="h-1 border-b border-[#b98f48] bg-[#dfb163]"></div>
    <MenuBar />
    <MainToolbar />
    <LineToolbar />
    <main className="flex flex-1 pr-0.5">
      <aside className="flex w-[199px] flex-col pt-px">
        <MarketWatch />
        <Navigator />
      </aside>
      <Chart />
    </main>
    <Terminal />
    <StatusBar />
    <div className="h-0.5 bg-[#b8a47c]"></div>
  </div>
)

export default App
